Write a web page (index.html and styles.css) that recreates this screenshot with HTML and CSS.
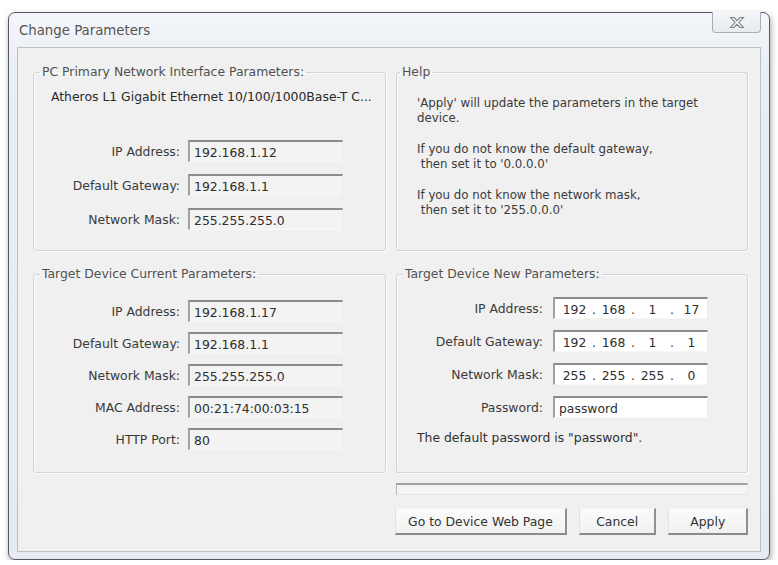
FILE: index.html
```html
<!DOCTYPE html>
<html lang="en">
<head>
  <meta charset="UTF-8">
  <meta name="viewport" content="width=device-width, initial-scale=1.0">
  <title>Change Parameters</title>
  <link rel="stylesheet" href="styles.css">
</head>
<body>

  <div class="window">
    <div class="titlebar">
      <span class="title">Change Parameters</span>
      <button class="close-btn" title="Close">
        <svg width="16" height="13" viewBox="0 0 16 13">
          <path d="M1.5 1.5 L5 1.5 L8 4.6 L11 1.5 L14.5 1.5 L10 6.5 L14.5 11.5 L11 11.5 L8 8.4 L5 11.5 L1.5 11.5 L6 6.5 Z" fill="#eef1f5" stroke="#7d838a" stroke-width="1.1"/>
        </svg>
      </button>
    </div>

    <div class="client">
      <fieldset class="group top-group pc-group">
        <legend>PC Primary Network Interface Parameters:</legend>
        <div class="adapter">Atheros L1 Gigabit Ethernet 10/100/1000Base-T C...</div>
        <div class="rows wide-rows">
          <div class="row"><label>IP Address:</label><span class="field">192.168.1.12</span></div>
          <div class="row"><label>Default Gateway:</label><span class="field">192.168.1.1</span></div>
          <div class="row"><label>Network Mask:</label><span class="field">255.255.255.0</span></div>
        </div>
      </fieldset>

      <fieldset class="group top-group help-group">
        <legend>Help</legend>
        <p>'Apply' will update the parameters in the target<br>device.</p>
        <p>If you do not know the default gateway,<br>&nbsp;then set it to '0.0.0.0'</p>
        <p>If you do not know the network mask,<br>&nbsp;then set it to '255.0.0.0'</p>
      </fieldset>

      <fieldset class="group bottom-group current-group">
        <legend>Target Device Current Parameters:</legend>
        <div class="rows">
          <div class="row"><label>IP Address:</label><span class="field">192.168.1.17</span></div>
          <div class="row"><label>Default Gateway:</label><span class="field">192.168.1.1</span></div>
          <div class="row"><label>Network Mask:</label><span class="field">255.255.255.0</span></div>
          <div class="row"><label>MAC Address:</label><span class="field">00:21:74:00:03:15</span></div>
          <div class="row"><label>HTTP Port:</label><span class="field">80</span></div>
        </div>
      </fieldset>

      <div class="right-col">
        <fieldset class="group bottom-group new-group">
          <legend>Target Device New Parameters:</legend>
          <div class="rows new-rows">
            <div class="row">
              <label>IP Address:</label>
              <span class="field edit ip">
                <span class="oct">192</span><span class="dot">.</span><span class="oct">168</span><span class="dot">.</span><span class="oct">1</span><span class="dot">.</span><span class="oct">17</span>
              </span>
            </div>
            <div class="row">
              <label>Default Gateway:</label>
              <span class="field edit ip">
                <span class="oct">192</span><span class="dot">.</span><span class="oct">168</span><span class="dot">.</span><span class="oct">1</span><span class="dot">.</span><span class="oct">1</span>
              </span>
            </div>
            <div class="row">
              <label>Network Mask:</label>
              <span class="field edit ip">
                <span class="oct">255</span><span class="dot">.</span><span class="oct">255</span><span class="dot">.</span><span class="oct">255</span><span class="dot">.</span><span class="oct">0</span>
              </span>
            </div>
            <div class="row">
              <label for="password">Password:</label>
              <input class="field edit" id="password" type="text" value="password">
            </div>
          </div>
          <div class="note">The default password is "password".</div>
        </fieldset>

        <div class="progress"></div>

        <div class="buttons">
          <button class="btn btn-web">Go to Device Web Page</button>
          <button class="btn btn-cancel">Cancel</button>
          <button class="btn btn-apply">Apply</button>
        </div>
      </div>
    </div>
  </div>

</body>
</html>
```

FILE: styles.css
```css
body {
  margin: 0;
  background-color: #fff;
  font-family: 'DejaVu Sans', sans-serif;
  font-size: 12.4px;
  color: #3a3a3a;
}

.window {
  box-sizing: border-box;
  width: 762px;
  height: 548px;
  margin: 12px 0 0 8px;
  padding: 0 8px 7px 8px;
  display: flex;
  flex-direction: column;
  background: linear-gradient(#f3f6fa, #e9eef4 60px, #e6ebf1);
  border: 1px solid #55595e;
  border-radius: 7px;
  box-shadow: 1px 3px 6px rgba(0, 0, 0, 0.35);
}

.titlebar {
  height: 34px;
  display: flex;
  align-items: flex-start;
  justify-content: space-between;
}

.title {
  margin-top: 10px;
  padding-left: 2px;
  font-size: 13.3px;
  color: #555;
}

.close-btn {
  width: 49px;
  height: 21px;
  margin-top: -1px;
  padding: 0;
  display: flex;
  align-items: center;
  justify-content: center;
  background: linear-gradient(#f4f6f9, #e7ebf0);
  border: 1px solid #a6adb5;
  border-top: none;
  border-radius: 0 0 4px 4px;
}

.client {
  flex: 1;
  box-sizing: border-box;
  padding: 17px 12px 0 15px;
  display: grid;
  grid-template-columns: 353px 352px;
  grid-template-rows: 186px auto;
  column-gap: 10px;
  row-gap: 16px;
  align-items: start;
  background-color: #f0f0f0;
  border: 1px solid #b9c0c8;
}

.group {
  box-sizing: border-box;
  margin: 0;
  padding: 0;
  min-width: 0;
  border: 1px solid #d3d3d3;
  border-radius: 3px;
  box-shadow: inset 1px 1px 0 #fbfbfb, 1px 1px 0 #fbfbfb;
}

.group legend {
  margin-left: 6px;
  padding: 0 2px;
  line-height: 14px;
  color: #505050;
}

.top-group {
  height: 186px;
}

.bottom-group {
  height: 206px;
}

.help-group legend {
  margin-left: 3px;
}

.adapter {
  margin: 11px 0 0 17px;
  line-height: 14px;
  white-space: nowrap;
  color: #2a2a2a;
}

.rows {
  display: flex;
  flex-direction: column;
  gap: 10px;
  margin-top: 19px;
}

.wide-rows {
  gap: 12px;
  margin-top: 36px;
}

.new-rows {
  gap: 11px;
  margin-top: 16px;
}

.row {
  display: flex;
  align-items: center;
  height: 22px;
}

.row label {
  width: 146px;
  text-align: right;
  white-space: nowrap;
  color: #3a3a3a;
}

.field {
  box-sizing: border-box;
  width: 155px;
  height: 22px;
  margin-left: 8px;
  padding: 2px 0 0 4px;
  display: flex;
  align-items: center;
  font: inherit;
  color: #2f2f2f;
  background-color: #f3f3f3;
  border-top: 2px solid #8c8c8c;
  border-left: 2px solid #a0a0a0;
  border-right: 1px solid #ececec;
  border-bottom: 1px solid #f7f7f7;
}

.field.edit {
  margin-left: 10px;
  background-color: #fff;
}

.field.ip {
  padding-left: 4px;
}

.oct {
  width: 31px;
  text-align: center;
}

.dot {
  width: 8px;
  text-align: center;
}

.help-group p {
  margin: 0 0 17px 20px;
  font-size: 11.8px;
  line-height: 14.5px;
}

.help-group p:first-of-type {
  margin-top: 17px;
}

.note {
  margin: 12px 0 0 20px;
  color: #2f2f2f;
}

.right-col {
  display: flex;
  flex-direction: column;
}

.progress {
  box-sizing: border-box;
  height: 12px;
  margin-top: 10px;
  background-color: #f4f4f4;
  border-top: 2px solid #a2a2a2;
  border-left: 1px solid #b4b4b4;
  border-right: 1px solid #e6e6e6;
  border-bottom: 1px solid #e6e6e6;
}

.buttons {
  display: flex;
  gap: 12px;
  margin-top: 13px;
  margin-left: -1px;
}

.btn {
  height: 27px;
  padding: 0;
  font: inherit;
  color: #333;
  background: linear-gradient(#fbfbfb, #f1f1f1);
  border-top: 1px solid #f4f4f4;
  border-left: 1px solid #e2e2e2;
  border-right: 2px solid #909090;
  border-bottom: 2px solid #8a8a8a;
}

.btn-web {
  width: 173px;
}

.btn-cancel {
  width: 78px;
}

.btn-apply {
  width: 80px;
}
```
